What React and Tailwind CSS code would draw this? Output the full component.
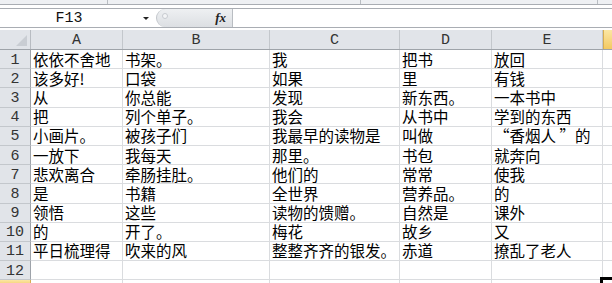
const rows = [
  ["依依不舍地", "书架。", "我", "把书", "放回"],
  ["该多好!", "口袋", "如果", "里", "有钱"],
  ["从", "你总能", "发现", "新东西。", "一本书中"],
  ["把", "列个单子。", "我会", "从书中", "学到的东西"],
  ["小画片。", "被孩子们", "我最早的读物是", "叫做", "“香烟人 ”的"],
  ["一放下", "我每天", "那里。", "书包", "就奔向"],
  ["悲欢离合", "牵肠挂肚。", "他们的", "常常", "使我"],
  ["是", "书籍", "全世界", "营养品。", "的"],
  ["领悟", "这些", "读物的馈赠。", "自然是", "课外"],
  ["的", "开了。", "梅花", "故乡", "又"],
  ["平日梳理得", "吹来的风", "整整齐齐的银发。", "赤道", "撩乱了老人"],
  ["", "", "", "", ""],
];

// column widths incl. right gridline
const cols = [
  { name: "A", w: "w-[92px]" },
  { name: "B", w: "w-[147px]" },
  { name: "C", w: "w-[130px]" },
  { name: "D", w: "w-[92px]" },
  { name: "E", w: "w-[111px]" },
];

const mono = { fontFamily: '"Liberation Mono", monospace' };
const cjk = { fontFamily: '"Noto Sans CJK SC", "Noto Sans", sans-serif' };

function TopStrip() {
  return (
    <div className="h-[5px] flex bg-[#eef0f3] border-b border-[#a9adb3]">
      <div className="w-[108px] border-r border-[#b9bdc2]" />
      <div className="w-[253px] border-r border-[#b9bdc2]" />
      <div className="w-[237px] border-r border-[#b9bdc2]" />
      <div className="flex-1" />
    </div>
  );
}

function FormulaBar() {
  return (
    <div className="h-[20px] flex border-y border-[#a9adb3] bg-white">
      <div className="w-[138px] flex items-center justify-center pt-[1px] text-[15px] leading-[16px] text-[#111]" style={mono}>
        F13
      </div>
      <div className="w-[18px] flex items-center pl-[5px]">
        <div className="w-0 h-0 border-l-[3px] border-r-[3px] border-t-[3px] border-l-transparent border-r-transparent border-t-[#222]" />
      </div>
      <div className="w-[76px] h-full rounded-l-full bg-gradient-to-b from-[#eef0f2] to-[#dcdfe3] border-l border-[#c2c6cb] flex items-center">
        <div className="ml-[5px] mb-[4px] w-[6px] h-[6px] rounded-full border border-[#c7cbd0] bg-[#f4f5f7]" />
        <div className="ml-auto mr-[6px] text-[13px] leading-[14px] italic font-bold text-[#222]" style={{ fontFamily: '"Liberation Serif", serif' }}>
          fx
        </div>
      </div>
      <div className="flex-1 border-l border-[#b9bdc2]" />
    </div>
  );
}

function HeaderRow() {
  return (
    <div className="h-[20px] flex bg-[#e1e4e9] border-b border-[#9ea3a9] text-[15px] leading-[16px] text-[#333]" style={mono}>
      <div className="w-[31px] border-r border-[#b8bcc2] flex items-end justify-end pr-[3px] pb-[3px]">
        <svg width="11" height="11" viewBox="0 0 11 11">
          <path d="M11 0 L11 11 L0 11 Z" fill="#c9cdd3" />
        </svg>
      </div>
      {cols.map((c) => (
        <div key={c.name} className={`${c.w} border-r border-[#c3c7cc] flex items-center justify-center pt-[3px]`}>
          {c.name}
        </div>
      ))}
      <div className="flex-1 bg-gradient-to-b from-[#fbe6a3] to-[#f3c95f] border-l border-[#d7ad52]" />
    </div>
  );
}

function DataRow({ n, cells }) {
  return (
    <div className="h-[19.2px] flex border-b border-[#dadcdf]">
      <div
        className="w-[31px] shrink-0 bg-[#e1e4e9] border-r border-[#9ea3a9] border-b border-b-[#c3c7cc] -mb-px flex items-center justify-center pt-[3px] text-[15px] leading-[14px] text-[#333]"
        style={mono}
      >
        {n}
      </div>
      {cells.map((t, i) => (
        <div
          key={i}
          className={`${cols[i].w} shrink-0 border-r border-[#dadcdf] pl-[2px] flex items-center whitespace-nowrap text-[15.5px] leading-[17px] text-black`}
          style={cjk}
        >
          {t}
        </div>
      ))}
      <div className="flex-1" />
    </div>
  );
}

export default function App() {
  return (
    <div className="w-[612px] h-[283px] overflow-hidden bg-white">
      <TopStrip />
      <div className="h-[3px] bg-white" />
      <FormulaBar />
      <div className="h-[2px] bg-white" />
      <HeaderRow />
      {rows.map((r, i) => (
        <DataRow key={i} n={i + 1} cells={r} />
      ))}
      <div className="h-[6px] flex">
        <div className="w-[31px] bg-gradient-to-b from-[#fbe6a3] to-[#f3c95f] border-r border-[#d7ad52]" />
        <div className="w-[92px] border-r border-[#dadcdf]" />
        <div className="w-[147px] border-r border-[#dadcdf]" />
        <div className="w-[130px] border-r border-[#dadcdf]" />
        <div className="w-[92px] border-r border-[#dadcdf]" />
        <div className="w-[110px]" />
        <div className="flex-1 relative">
          <div className="absolute -top-[3px] -left-[2px] right-0 h-[10px] border-t-[3px] border-l-[3px] border-black" />
        </div>
      </div>
    </div>
  );
}
